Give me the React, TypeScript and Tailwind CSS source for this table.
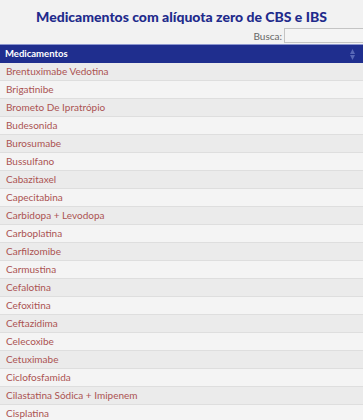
import React from 'react';

const meds = [
  'Brentuximabe Vedotina',
  'Brigatinibe',
  'Brometo De Ipratrópio',
  'Budesonida',
  'Burosumabe',
  'Bussulfano',
  'Cabazitaxel',
  'Capecitabina',
  'Carbidopa + Levodopa',
  'Carboplatina',
  'Carfilzomibe',
  'Carmustina',
  'Cefalotina',
  'Cefoxitina',
  'Ceftazidima',
  'Celecoxibe',
  'Cetuximabe',
  'Ciclofosfamida',
  'Cilastatina Sódica + Imipenem',
  'Cisplatina',
];

const App: React.FC = () => {
  return (
    <div className="min-h-screen overflow-hidden bg-[#f2f2f2] font-['Lato',sans-serif]">
      <h1 className="flex h-[28px] items-end justify-center pb-[1px] text-[14px] font-black leading-[20px] text-[#1f2b8c]">
        Medicamentos com alíquota zero de CBS e IBS
      </h1>
      <div className="flex h-[16px] items-start justify-end gap-[2px]">
        <span className="pt-[2px] text-[10px] leading-[12px] text-[#666]">Busca:</span>
        <input className="-mr-[6px] h-[15px] w-[85px] shrink-0 border border-[#c4c4c4] bg-[#f4f4f4]" />
      </div>
      <div className="flex h-[19px] items-center justify-between border-t border-[#8b95cf] bg-[#1f2e8e] px-[5px]">
        <span className="text-[9.5px] font-bold text-white">Medicamentos</span>
        <svg width="5" height="11" viewBox="0 0 5 11" className="mr-[3px] opacity-70">
          <path d="M2.5 0 L5 5 L0 5 Z" fill="#7180c8" />
          <path d="M2.5 11 L5 6 L0 6 Z" fill="#7180c8" />
        </svg>
      </div>
      <div>
        {meds.map((m, i) => (
          <div
            key={m}
            className={`flex h-[18px] items-center border-b border-[#dedede] px-[6px] text-[10px] text-[#ab5352] ${
              i % 2 === 0 ? 'bg-[#ebebeb]' : 'bg-[#f4f4f4]'
            }`}
          >
            {m}
          </div>
        ))}
      </div>
    </div>
  );
};

export default App;
